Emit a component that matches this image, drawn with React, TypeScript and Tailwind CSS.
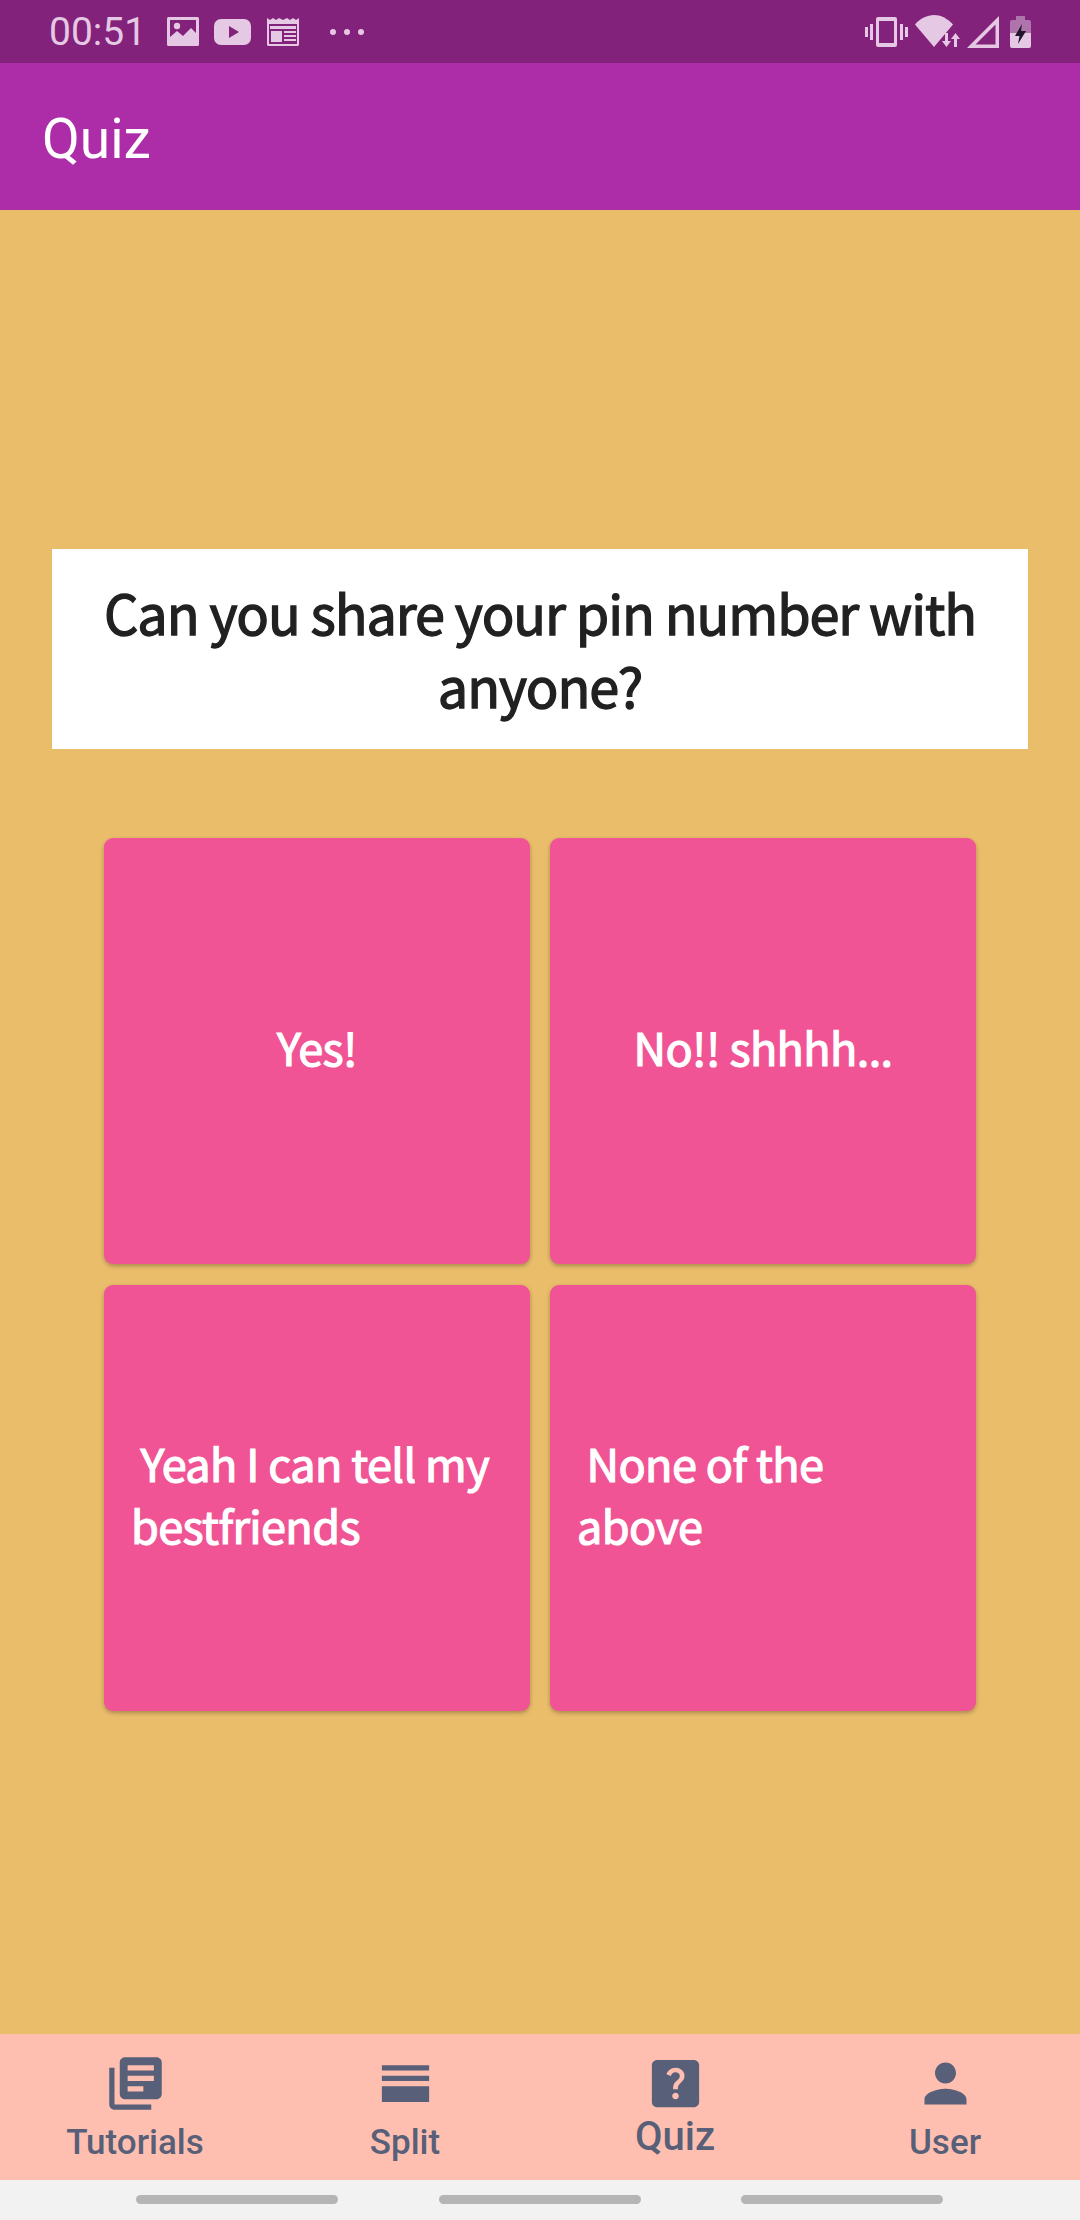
import React from "react";
import { MdLibraryBooks, MdHorizontalSplit, MdHelpCenter, MdPerson } from "react-icons/md";

const C = "#E5C8E3";

function ImageIcon() {
  return (
    <svg width="32" height="29" viewBox="0 0 32 29" className="ml-[21px]">
      <path fill={C} fillRule="evenodd" d="M1.5 0h29A1.5 1.5 0 0 1 32 1.5v26a1.5 1.5 0 0 1-1.5 1.5h-29A1.5 1.5 0 0 1 0 27.5v-26A1.5 1.5 0 0 1 1.5 0zM3 3v17l7-6 6 5 8-8 5 5V3z" />
      <circle cx="10" cy="9" r="3.2" fill={C} />
    </svg>
  );
}
function VideoIcon() {
  return (
    <svg width="37" height="26" viewBox="0 0 37 26" className="ml-[15px]">
      <path fill={C} fillRule="evenodd" d="M7 0h23a7 7 0 0 1 7 7v12a7 7 0 0 1-7 7H7a7 7 0 0 1-7-7V7a7 7 0 0 1 7-7zm8 7v12l10-6z" />
    </svg>
  );
}
function NewsIcon() {
  return (
    <svg width="32" height="28" viewBox="0 0 32 28" className="ml-[16px]">
      <path fill={C} fillRule="evenodd" d="M0 0l3 2 3-2 3 2 3-2 4 2 4-2 3 2 3-2 3 2 3-2v26.500a1.500 1.500 0 0 1-1.500 1.500h-29A1.500 1.500 0 0 1 0 26.500zM2 6v20h28V6zM3 8h26v3H3zM4 13h11v11H4zM17 13h12v2H17zM17 17h12v2H17zM17 21h12v2H17z" />
    </svg>
  );
}
function Dots() {
  return (
    <svg width="34" height="6" viewBox="0 0 34 6" className="ml-[31px]">
      <circle cx="3" cy="3" r="3" fill={C} />
      <circle cx="17" cy="3" r="3" fill={C} />
      <circle cx="31" cy="3" r="3" fill={C} />
    </svg>
  );
}
function Vibrate() {
  return (
    <svg width="43" height="30" viewBox="0 0 43 30">
      <path fill={C} fillRule="evenodd" d="M13 0h17a2 2 0 0 1 2 2v26a2 2 0 0 1-2 2H13a2 2 0 0 1-2-2V2a2 2 0 0 1 2-2zm1 4v22h15V4zM0 10h3v10H0zM5 7h3v16H5zM35 7h3v16h-3zM40 10h3v10h-3z" />
    </svg>
  );
}
function Wifi() {
  return (
    <svg width="46" height="33" viewBox="0 0 46 33" className="ml-[7px]">
      <path fill={C} d="M0 9.500C5 3.500 12.500 0 19 0s13 3 19 9.500L19 32z" />
      <path fill="#82227A" d="M26 33l10-16h10v16z" />
      <path fill={C} d="M29 18h3v8h3l-4.500 6-4.500-6h3zM41 32h-3v-8h-3l4.500-6 4.500 6h-3z" transform="translate(1 0)" />
    </svg>
  );
}
function Signal() {
  return (
    <svg width="32" height="32" viewBox="0 0 32 32" className="ml-[6px]">
      <path fill={C} fillRule="evenodd" d="M32 0v32H0zM28.500 8.500L8.500 28.500h20z" />
    </svg>
  );
}
function Battery() {
  return (
    <svg width="21" height="32" viewBox="0 0 21 32" className="ml-[11px]">
      <path fill="#B074AC" d="M6 0h9v4h4a2 2 0 0 1 2 2v12H0V6a2 2 0 0 1 2-2h4z" />
      <path fill={C} d="M0 17h21v13a2 2 0 0 1-2 2H2a2 2 0 0 1-2-2z" />
      <path fill="#22172A" d="M12 8l-7 12h4.500L8 28l8-13h-5z" />
    </svg>
  );
}

function Tab({ icon, label, active }: { icon: React.ReactNode; label: string; active?: boolean }) {
  return (
    <div className="flex-1 flex flex-col items-center pt-[18px]">
      {icon}
      <span
        className={
          active
            ? "text-[40px] leading-[46px] font-medium text-[#585F78] -mt-[1px]"
            : "text-[35px] leading-[41px] font-medium text-[#585F78] mt-[7px]"
        }
      >
        {label}
      </span>
    </div>
  );
}

function Answer({ text, center }: { text: string; center?: boolean }) {
  return (
    <div
      className={
        "h-[426px] rounded-[9px] bg-[#F05495] shadow-[0_2px_4px_rgba(0,0,0,0.28)] flex items-center px-[27px] pb-[8px] text-white text-[45px] leading-[62px] tracking-[-0.600px] [-webkit-text-stroke:1.200px_#ffffff] whitespace-pre-wrap " +
        (center ? "justify-center text-center" : "text-left")
      }
    >
      <span>{text}</span>
    </div>
  );
}

export default function App() {
  return (
    <div
      className="w-[1080px] h-[2220px] flex flex-col overflow-hidden bg-[#F2F2F2]"
      style={{ fontFamily: "Roboto, sans-serif" }}
    >
      <div className="h-[63px] bg-[#82227A] flex items-center pl-[49px] pr-[49px]">
        <span className="text-[39px] leading-[46px] text-[#E5C8E3]">00:51</span>
        <ImageIcon />
        <VideoIcon />
        <NewsIcon />
        <Dots />
        <div className="ml-auto flex items-center">
          <Vibrate />
          <Wifi />
          <Signal />
          <Battery />
        </div>
      </div>
      <div className="h-[147px] bg-[#AD2DA8] flex items-center pl-[42px] pt-[5px]">
        <span className="text-[55px] leading-[62px] text-white">Quiz</span>
      </div>
      <main
        className="flex-1 bg-[#EABD6B] pt-[339px] flex flex-col"
        style={{ fontFamily: '"Noto Sans CJK SC", "Noto Sans", sans-serif' }}
      >
        <div className="mx-[52px] h-[200px] pb-[2px] bg-white flex items-center justify-center text-center px-[20px] text-[54px] leading-[73px] tracking-[-1.100px] [-webkit-text-stroke:1.300px_#212121] text-[#212121]">
          Can you share your pin number with anyone?
        </div>
        <div className="mt-[89px] mx-[104px] grid grid-cols-2 gap-x-[20px] gap-y-[21px]">
          <Answer text="Yes!" center />
          <Answer text="No!! shhhh..." center />
          <Answer text=" Yeah I can tell my bestfriends" />
          <Answer text=" None of the above" />
        </div>
      </main>
      <nav className="h-[146px] bg-[#FFBFB0] flex shrink-0">
        <Tab icon={<MdLibraryBooks size={63} color="#585F78" />} label="Tutorials" />
        <Tab icon={<MdHorizontalSplit size={63} color="#585F78" />} label="Split" />
        <Tab icon={<MdHelpCenter size={63} color="#585F78" />} label="Quiz" active />
        <Tab icon={<MdPerson size={63} color="#585F78" />} label="User" />
      </nav>
      <div className="h-[40px] shrink-0 flex justify-between pt-[15px] pl-[136px] pr-[137px]">
        <div className="w-[202px] h-[9px] rounded-full bg-[#B5B5B5]" />
        <div className="w-[202px] h-[9px] rounded-full bg-[#B5B5B5]" />
        <div className="w-[202px] h-[9px] rounded-full bg-[#B5B5B5]" />
      </div>
    </div>
  );
}
